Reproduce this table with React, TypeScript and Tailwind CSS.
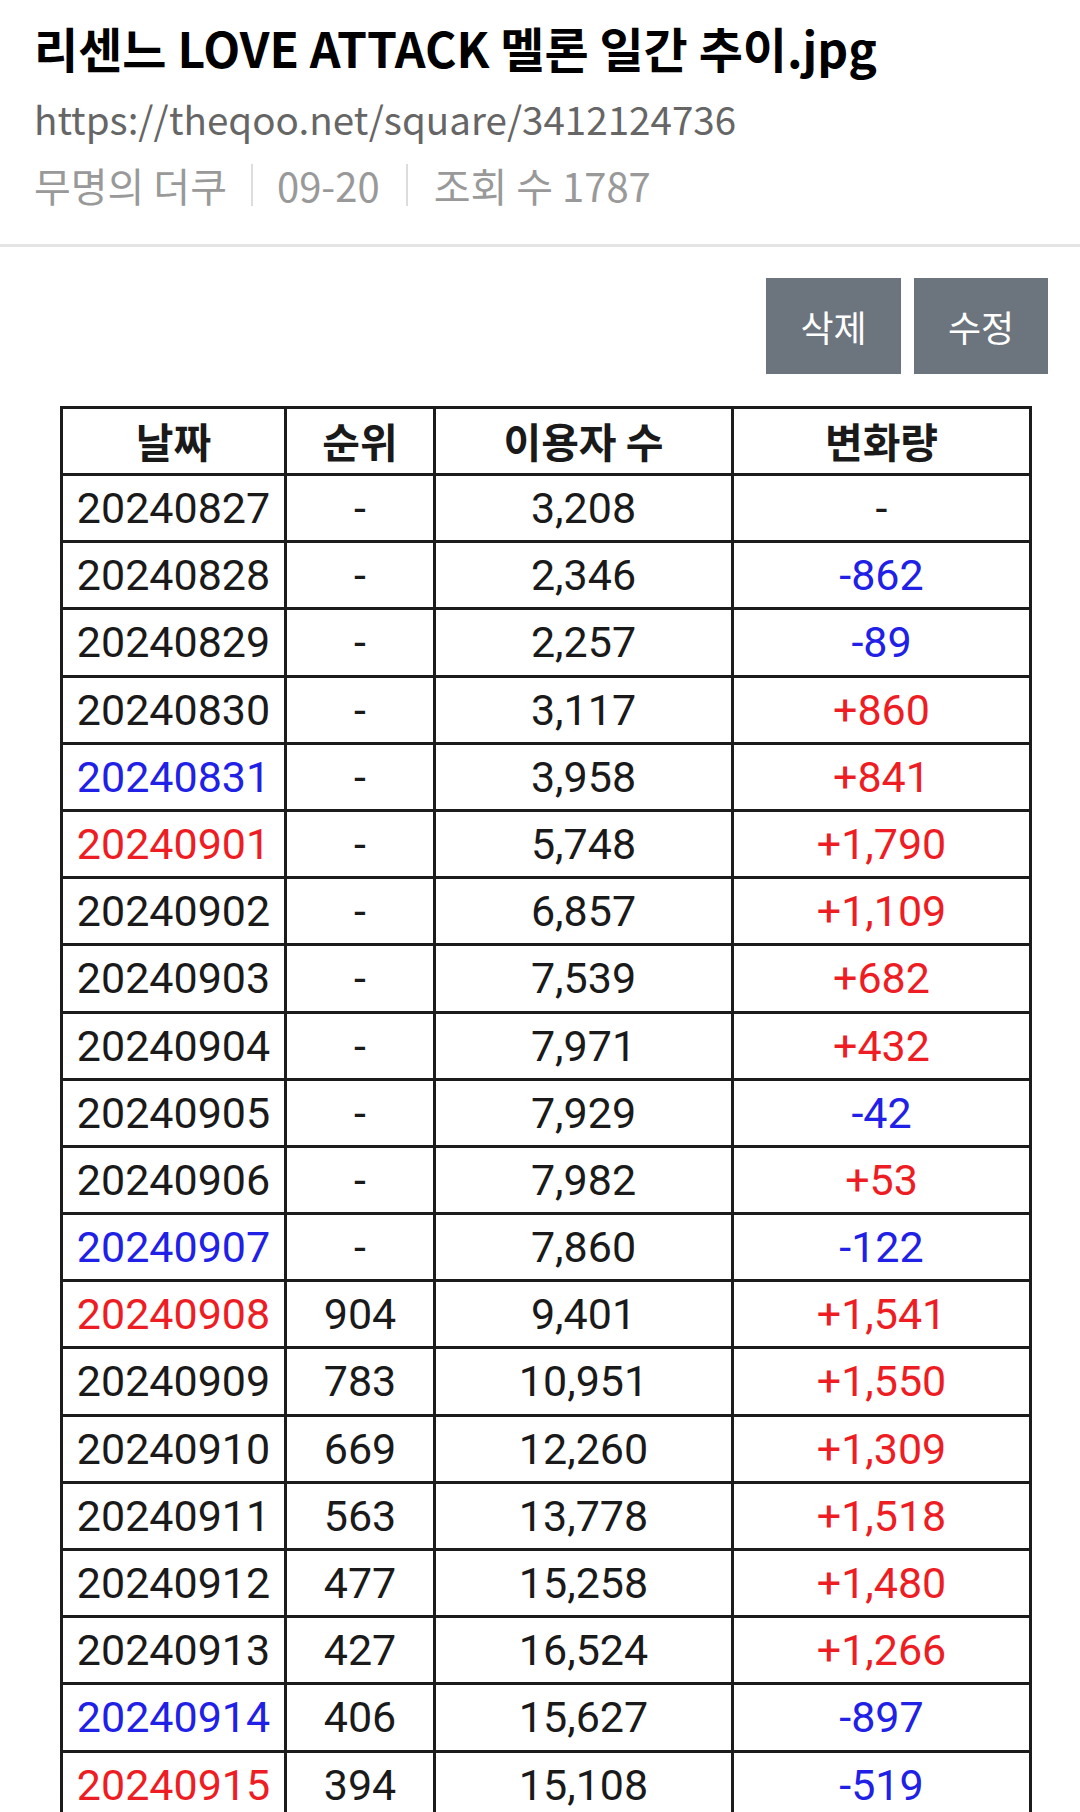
const rows: [string, string, string, string, string?, string?][] = [
  ['20240827', '-', '3,208', '-'],
  ['20240828', '-', '2,346', '-862', '', 'b'],
  ['20240829', '-', '2,257', '-89', '', 'b'],
  ['20240830', '-', '3,117', '+860', '', 'r'],
  ['20240831', '-', '3,958', '+841', 'b', 'r'],
  ['20240901', '-', '5,748', '+1,790', 'r', 'r'],
  ['20240902', '-', '6,857', '+1,109', '', 'r'],
  ['20240903', '-', '7,539', '+682', '', 'r'],
  ['20240904', '-', '7,971', '+432', '', 'r'],
  ['20240905', '-', '7,929', '-42', '', 'b'],
  ['20240906', '-', '7,982', '+53', '', 'r'],
  ['20240907', '-', '7,860', '-122', 'b', 'b'],
  ['20240908', '904', '9,401', '+1,541', 'r', 'r'],
  ['20240909', '783', '10,951', '+1,550', '', 'r'],
  ['20240910', '669', '12,260', '+1,309', '', 'r'],
  ['20240911', '563', '13,778', '+1,518', '', 'r'],
  ['20240912', '477', '15,258', '+1,480', '', 'r'],
  ['20240913', '427', '16,524', '+1,266', '', 'r'],
  ['20240914', '406', '15,627', '-897', 'b', 'b'],
  ['20240915', '394', '15,108', '-519', 'r', 'b'],
];

const tone = (c?: string) =>
  c === 'b' ? 'text-[#2020e6]' : c === 'r' ? 'text-[#ee1d23]' : 'text-[#1a1a1a]';

const cell = 'flex items-center justify-center border-r-[3px] border-[#1c1c1c]';

export default function App() {
  return (
    <div className="min-h-[1812px] w-[1080px] overflow-hidden bg-white font-['Noto_Sans_CJK_KR','Noto_Sans',sans-serif]">
      {/* post header */}
      <div className="px-[34px] pt-[15px] pb-[33px] border-b-[3px] border-[#e4e4e4]">
        <h1 className="text-[48px] font-bold leading-[64px] text-black">
          리센느 LOVE ATTACK 멜론 일간 추이.jpg
        </h1>
        <div className="mt-[13px] text-[38.6px] leading-[52px] text-[#666]">
          https://theqoo.net/square/3412124736
        </div>
        <div className="mt-[15px] flex items-center text-[40px] leading-[52px] text-[#999]">
          <span>무명의 더쿠</span>
          <span className="mx-[24px] h-[42px] w-[2px] bg-[#ddd]" />
          <span>09-20</span>
          <span className="mx-[26px] h-[42px] w-[2px] bg-[#ddd]" />
          <span>조회 수 1787</span>
        </div>
      </div>

      {/* actions */}
      <div className="flex justify-end gap-[13px] pr-[32px] pt-[31px]">
        <button className="h-[96px] w-[135px] bg-[#6c747d] text-[36px] text-white">삭제</button>
        <button className="h-[96px] w-[134px] bg-[#6c747d] text-[36px] text-white">수정</button>
      </div>

      {/* melon table image */}
      <div className="ml-[60px] mt-[32px] w-[972px] border-l-[3px] border-t-[3px] border-[#1c1c1c]">
        <div className="grid h-[67px] grid-cols-[224px_149px_298px_298px] border-b-[3px] border-[#1c1c1c] text-[41px] font-bold text-[#1a1a1a]">
          <div className={cell}>날짜</div>
          <div className={cell}>순위</div>
          <div className={cell}>이용자 수</div>
          <div className={cell}>변화량</div>
        </div>
        {rows.map(([d, rank, users, diff, dc, fc]) => (
          <div
            key={d}
            className="grid h-[67.2px] grid-cols-[224px_149px_298px_298px] border-b-[3px] border-[#1c1c1c] font-['Roboto','Liberation_Sans',sans-serif] text-[43px]"
          >
            <div className={`${cell} ${tone(dc)}`}>{d}</div>
            <div className={`${cell} text-[#1a1a1a]`}>{rank}</div>
            <div className={`${cell} text-[#1a1a1a]`}>{users}</div>
            <div className={`${cell} ${tone(fc)}`}>{diff}</div>
          </div>
        ))}
      </div>
    </div>
  );
}
